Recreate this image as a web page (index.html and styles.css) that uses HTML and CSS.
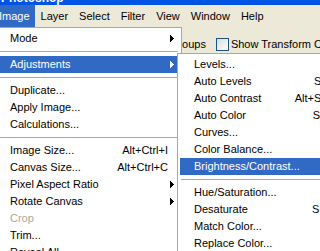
FILE: index.html
```html
<!DOCTYPE html>
<html>
<head>
<meta charset="utf-8">
<link rel="stylesheet" href="styles.css">
</head>
<body>
<div class="titlebar"><span>Photoshop</span></div>
<nav class="menubar">
  <span class="active">Image</span>
  <span>Layer</span>
  <span>Select</span>
  <span>Filter</span>
  <span>View</span>
  <span>Window</span>
  <span>Help</span>
</nav>
<div class="options">
  <span>Auto Select Groups</span>
  <span class="checkbox"></span>
  <span>Show Transform Controls</span>
</div>

<div class="menu main">
  <div class="item"><span class="label">Mode</span><span class="arrow"><svg width="4" height="7" viewBox="0 0 4 7"><path d="M0 0h1v7H0zM1 1h1v5H1zM2 2h1v3H2zM3 3h1v1H3z" fill="currentColor"/></svg></span></div>
  <div class="sep"></div>
  <div class="item hl"><span class="label">Adjustments</span><span class="arrow"><svg width="4" height="7" viewBox="0 0 4 7"><path d="M0 0h1v7H0zM1 1h1v5H1zM2 2h1v3H2zM3 3h1v1H3z" fill="currentColor"/></svg></span></div>
  <div class="sep"></div>
  <div class="item"><span class="label">Duplicate...</span><span class="arrow"></span></div>
  <div class="item"><span class="label">Apply Image...</span><span class="arrow"></span></div>
  <div class="item"><span class="label">Calculations...</span><span class="arrow"></span></div>
  <div class="sep"></div>
  <div class="item"><span class="label">Image Size...</span><span class="key">Alt+Ctrl+I</span><span class="arrow"></span></div>
  <div class="item"><span class="label">Canvas Size...</span><span class="key">Alt+Ctrl+C</span><span class="arrow"></span></div>
  <div class="item"><span class="label">Pixel Aspect Ratio</span><span class="arrow"><svg width="4" height="7" viewBox="0 0 4 7"><path d="M0 0h1v7H0zM1 1h1v5H1zM2 2h1v3H2zM3 3h1v1H3z" fill="currentColor"/></svg></span></div>
  <div class="item"><span class="label">Rotate Canvas</span><span class="arrow"><svg width="4" height="7" viewBox="0 0 4 7"><path d="M0 0h1v7H0zM1 1h1v5H1zM2 2h1v3H2zM3 3h1v1H3z" fill="currentColor"/></svg></span></div>
  <div class="item disabled"><span class="label">Crop</span><span class="arrow"></span></div>
  <div class="item"><span class="label">Trim...</span><span class="arrow"></span></div>
  <div class="item"><span class="label">Reveal All</span><span class="arrow"></span></div>
</div>

<div class="menu sub">
  <div class="item"><span class="label">Levels...</span><span class="key">Ctrl+L</span><span class="arrow"></span></div>
  <div class="item"><span class="label">Auto Levels</span><span class="key">Shift+Ctrl+L</span><span class="arrow"></span></div>
  <div class="item"><span class="label">Auto Contrast</span><span class="key">Alt+Shift+Ctrl+L</span><span class="arrow"></span></div>
  <div class="item"><span class="label">Auto Color</span><span class="key">Shift+Ctrl+B</span><span class="arrow"></span></div>
  <div class="item"><span class="label">Curves...</span><span class="key">Ctrl+M</span><span class="arrow"></span></div>
  <div class="item"><span class="label">Color Balance...</span><span class="key">Ctrl+B</span><span class="arrow"></span></div>
  <div class="item hl"><span class="label">Brightness/Contrast...</span><span class="arrow"></span></div>
  <div class="sep"></div>
  <div class="item"><span class="label">Hue/Saturation...</span><span class="key">Ctrl+U</span><span class="arrow"></span></div>
  <div class="item"><span class="label">Desaturate</span><span class="key">Shift+Ctrl+U</span><span class="arrow"></span></div>
  <div class="item"><span class="label">Match Color...</span><span class="arrow"></span></div>
  <div class="item"><span class="label">Replace Color...</span><span class="arrow"></span></div>
</div>
</body>
</html>
```
FILE: styles.css
```css
* { box-sizing: border-box; }
html, body { margin: 0; padding: 0; }
body {
  position: relative;
  width: 320px;
  height: 251px;
  overflow: hidden;
  background: #ECE9D8;
  color: #000;
  font-family: "Liberation Sans", Arial, sans-serif;
  font-size: 11px;
}
.titlebar {
  height: 5px;
  background: #0054E3;
  color: #fff;
  overflow: hidden;
  font-weight: bold;
  font-size: 12px;
}
.titlebar span {
  display: block;
  line-height: 13px;
  margin-top: -8px;
  padding-left: 1px;
}
.menubar {
  display: flex;
  height: 22px;
  margin-left: -6.5px;
}
.menubar span {
  padding: 0 5.5px;
  line-height: 22px;
  white-space: nowrap;
}
.menubar .active {
  background: #316AC5;
  color: #fff;
}
.options {
  display: flex;
  align-items: center;
  height: 34px;
  padding-left: 110.5px;
  white-space: nowrap;
}
.options span { flex-shrink: 0; }
.checkbox {
  width: 13px;
  height: 13px;
  margin: 0 2px 0 10px;
  border: 1px solid #1C5180;
  background: linear-gradient(135deg, #DCDCD7, #FFFFFF);
}
.menu {
  position: absolute;
  background: #fff;
  border: 1px solid #ACA899;
  padding: 2px;
}
.menu.main {
  top: 27px;
  left: -7px;
  width: 189px;
}
.menu.sub {
  top: 53px;
  left: 177px;
  width: 209px;
}
.item {
  display: flex;
  height: 17px;
  line-height: 17px;
  padding-left: 14px;
  white-space: nowrap;
}
.item .label { flex: 1; }
.item .arrow {
  width: 11px;
  flex-shrink: 0;
  display: flex;
  align-items: center;
  padding-left: 2px;
}
.item .arrow svg { display: block; }
.item.hl {
  background: #316AC5;
  color: #fff;
}
.item.disabled { color: #ACA899; }
.sep {
  height: 9px;
  display: flex;
  align-items: center;
  padding: 0 1px;
}
.sep::before {
  content: "";
  flex: 1;
  height: 1px;
  background: #ACA899;
}
```
